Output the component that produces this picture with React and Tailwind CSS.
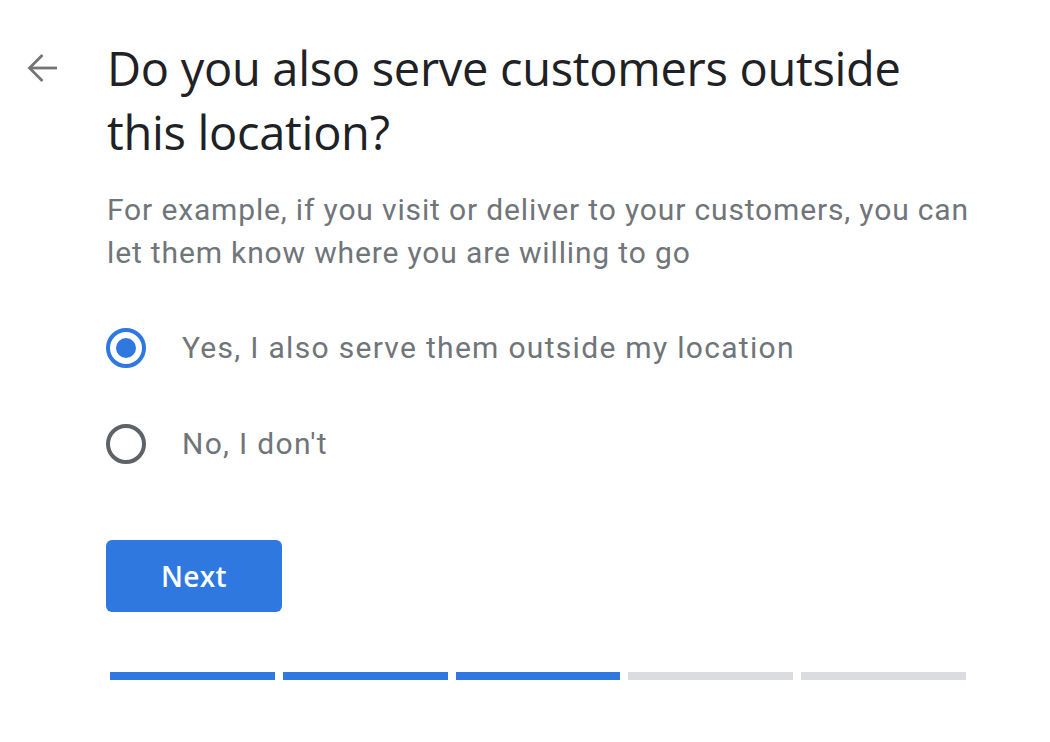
import React from "react";

export default function App() {
  const segs = [true, true, true, false, false];
  return (
    <div className="w-[1050px] h-[742px] bg-white relative" style={{ fontFamily: "Roboto, 'Liberation Sans', sans-serif" }}>
      <div className="flex pt-[36px]">
        <div className="w-[107px] flex justify-start pl-[26px] pt-[16px]">
          <svg width="32" height="32" viewBox="0 0 32 32" fill="none" stroke="#757575" strokeWidth="2.8" strokeLinecap="butt" strokeLinejoin="miter">
            <path d="M31 16H3.5" />
            <path d="M16.5 3L3.5 16l13 13" />
          </svg>
        </div>
        <div className="flex flex-col">
          <h1 className="text-[#202124] text-[47px] leading-[64px] font-normal tracking-[-0.3px]" style={{ fontFamily: "'Open Sans', Roboto, sans-serif" }}>
            Do you also serve customers outside
            <br />
            this location?
          </h1>
          <p className="mt-[24px] text-[#70757a] text-[30px] leading-[43px] tracking-[0.85px] whitespace-nowrap">
            For example, if you visit or deliver to your customers, you can
            <br />
            let them know where you are willing to go
          </p>
          <div className="mt-[54px] flex flex-col gap-[56px]">
            <div className="flex items-center">
              <div className="w-[40px] h-[40px] rounded-full border-[4px] border-[#2e78e0] flex items-center justify-center -ml-[1px]">
                <div className="w-[20px] h-[20px] rounded-full bg-[#2e78e0]" />
              </div>
              <span className="ml-[36px] text-[30px] leading-[40px] text-[#70757a] tracking-[1.3px] whitespace-nowrap">Yes, I also serve them outside my location</span>
            </div>
            <div className="flex items-center">
              <div className="w-[40px] h-[40px] rounded-full border-[4px] border-[#5f6368] -ml-[1px]" />
              <span className="ml-[36px] text-[30px] leading-[40px] text-[#70757a] tracking-[1.3px]">No, I don't</span>
            </div>
          </div>
          <button className="mt-[76px] w-[176px] h-[72px] -ml-[1px] rounded-[6px] bg-[#2e78e0] text-white text-[28px] font-semibold tracking-[0.3px]" style={{ fontFamily: "'Open Sans', Roboto, sans-serif" }}>
            Next
          </button>
          <div className="mt-[60px] ml-[3px] flex gap-[8px] w-[856px]">
            {segs.map((on, i) => (
              <div key={i} className={"flex-1 h-[8px] " + (on ? "bg-[#2e78e0]" : "bg-[#dadce0]")} />
            ))}
          </div>
        </div>
      </div>
    </div>
  );
}
